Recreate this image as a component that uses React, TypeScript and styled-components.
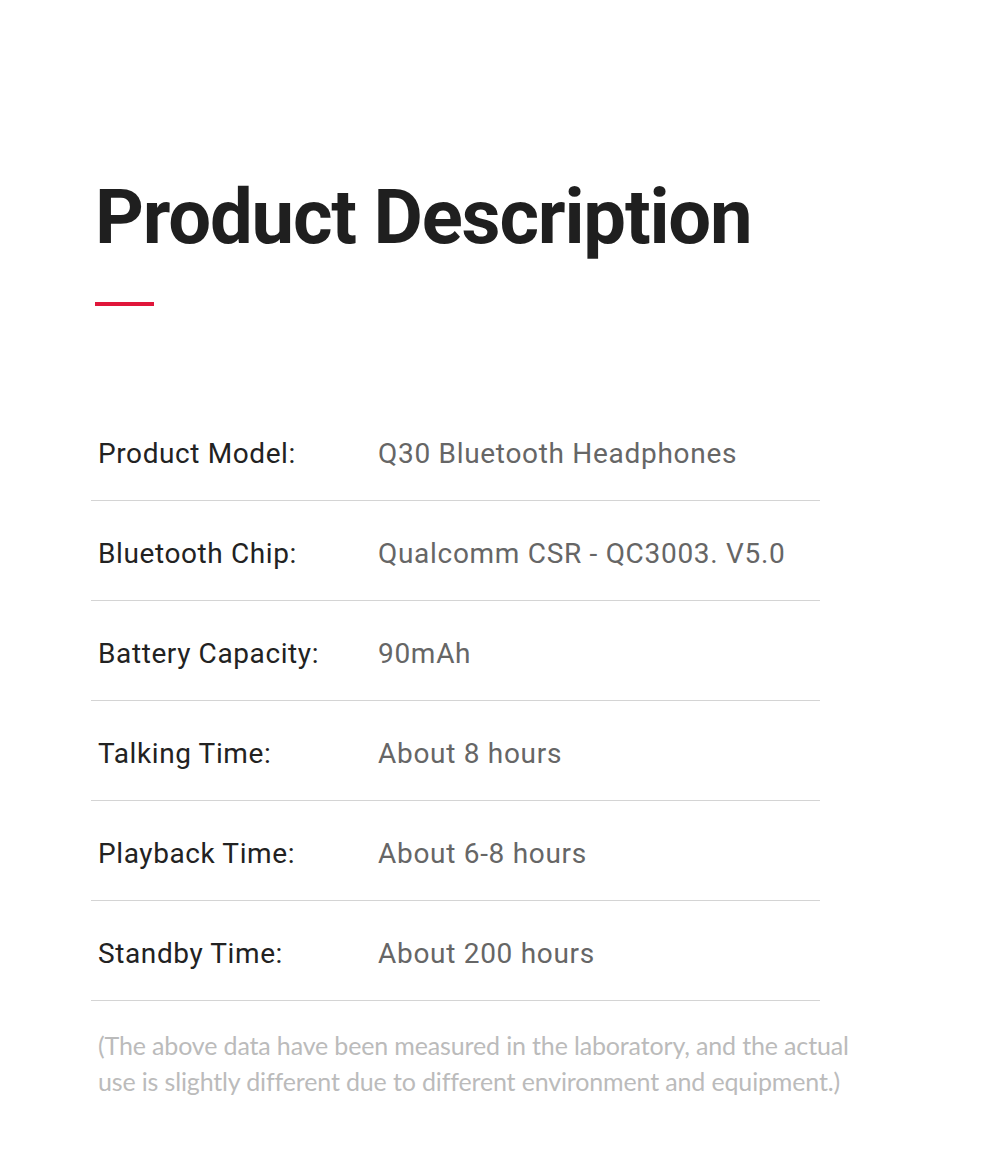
import { createGlobalStyle, styled } from "styled-components";

interface iSpec {
  label: string;
  value: string;
}

const specs: iSpec[] = [
  { label: "Product Model:", value: "Q30 Bluetooth Headphones" },
  { label: "Bluetooth Chip:", value: "Qualcomm CSR - QC3003. V5.0" },
  { label: "Battery Capacity:", value: "90mAh" },
  { label: "Talking Time:", value: "About 8 hours" },
  { label: "Playback Time:", value: "About 6-8 hours" },
  { label: "Standby Time:", value: "About 200 hours" },
];

const App = () => {
  return (
    <>
      <GlobalStyle />
      <Page>
        <Title>Product Description</Title>
        <Accent />
        <Table>
          {specs.map((s) => (
            <Row key={s.label}>
              <Label>{s.label}</Label>
              <Value>{s.value}</Value>
            </Row>
          ))}
        </Table>
        <Note>
          (The above data have been measured in the laboratory, and the actual
          <br />
          use is slightly different due to different environment and equipment.)
        </Note>
      </Page>
    </>
  );
};

export default App;

const GlobalStyle = createGlobalStyle`
  html, body {
    margin: 0;
    background: #fff;
  }
`;

const Page = styled.div`
  width: 990px;
  height: 1168px;
  box-sizing: border-box;
  padding: 172px 0 0 91px;
  font-family: Roboto, "Liberation Sans", sans-serif;
`;

const Title = styled.h1`
  margin: 0 0 0 4px;
  font-size: 76px;
  line-height: 90px;
  font-weight: 700;
  color: #1f1f1f;
  letter-spacing: -1.2px;
`;

const Accent = styled.div`
  width: 59px;
  height: 4px;
  margin: 40px 0 0 4px;
  background: #e0163a;
`;

const Table = styled.div`
  width: 729px;
  margin-top: 95px;
`;

const Row = styled.div`
  display: grid;
  grid-template-columns: 280px 1fr;
  align-items: center;
  height: 100px;
  padding: 6px 0 0 7px;
  box-sizing: border-box;
  border-bottom: 1px solid #d4d4d4;
`;

const Label = styled.div`
  font-size: 28px;
  color: #222;
  letter-spacing: 0.6px;
`;

const Value = styled.div`
  font-size: 28px;
  color: #666;
  letter-spacing: 0.7px;
`;

const Note = styled.p`
  margin: 26px 0 0 7px;
  font-family: Lato, sans-serif;
  font-size: 25px;
  line-height: 36px;
  color: #bbb;
  letter-spacing: -0.15px;
`;
